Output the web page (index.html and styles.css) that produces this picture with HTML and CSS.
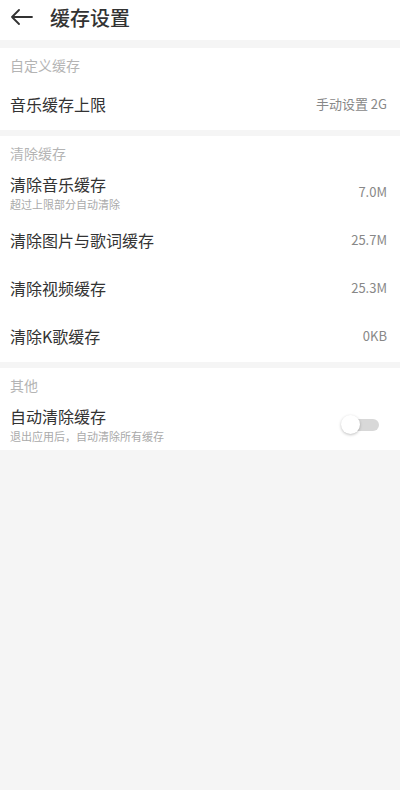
FILE: index.html
```html
<!DOCTYPE html>
<html lang="zh-CN">
<head>
    <meta charset="UTF-8">
    <meta name="viewport" content="width=device-width, initial-scale=1.0">
    <title>缓存设置</title>
    <link rel="stylesheet" href="styles.css">
</head>
<body>
<div class="header">
    <svg class="back" width="24" height="16" viewBox="0 0 24 16">
        <path d="M22 8H2M9 1L2 8l7 7" fill="none" stroke="#333" stroke-width="1.8" stroke-linecap="round" stroke-linejoin="round"/>
    </svg>
    <span class="title">缓存设置</span>
</div>

<div class="group">
    <div class="label">自定义缓存</div>
    <div class="row">
        <div class="main">音乐缓存上限</div>
        <div class="value">手动设置 2G</div>
    </div>
</div>

<div class="group">
    <div class="label">清除缓存</div>
    <div class="row">
        <div class="main">
            <div>清除音乐缓存</div>
            <div class="sub">超过上限部分自动清除</div>
        </div>
        <div class="value">7.0M</div>
    </div>
    <div class="row">
        <div class="main">清除图片与歌词缓存</div>
        <div class="value">25.7M</div>
    </div>
    <div class="row">
        <div class="main">清除视频缓存</div>
        <div class="value">25.3M</div>
    </div>
    <div class="row">
        <div class="main">清除K歌缓存</div>
        <div class="value">0KB</div>
    </div>
</div>

<div class="group">
    <div class="label">其他</div>
    <div class="row">
        <div class="main">
            <div>自动清除缓存</div>
            <div class="sub">退出应用后，自动清除所有缓存</div>
        </div>
        <div class="switch"><span class="knob"></span></div>
    </div>
</div>
</body>
</html>
```

FILE: styles.css
```css
body {
    margin: 0;
    background-color: #f5f5f5;
    font-family: "Noto Sans CJK SC", "Noto Sans", sans-serif;
    color: #333;
}

.header {
    height: 40px;
    background-color: #fff;
    display: flex;
    align-items: center;
    padding-left: 10px;
    margin-bottom: 8px;
}

.back {
    margin-right: 16px;
    margin-top: -6px;
}

.title {
    font-size: 20px;
    font-weight: 500;
    margin-top: -6px;
}

.group {
    background-color: #fff;
    margin-bottom: 6px;
}

.label {
    height: 34px;
    line-height: 34px;
    padding-left: 10px;
    font-size: 14px;
    color: #b4b4b4;
}

.row {
    height: 48px;
    box-sizing: border-box;
    display: flex;
    align-items: center;
    justify-content: space-between;
    padding: 0 13px 3px 10px;
}

.main {
    font-size: 16px;
    line-height: 23px;
}

.sub {
    font-size: 11px;
    line-height: 17px;
    color: #aaa;
}

.value {
    font-size: 13px;
    color: #888;
    margin-top: -2px;
}

.switch {
    width: 32px;
    height: 12px;
    border-radius: 6px;
    background-color: #d8d8d8;
    position: relative;
    margin-right: 8px;
}

.knob {
    position: absolute;
    left: -6px;
    top: -4px;
    width: 19px;
    height: 19px;
    border-radius: 50%;
    background-color: #fff;
    box-shadow: 0 1px 3px rgba(0, 0, 0, 0.25);
}
```
